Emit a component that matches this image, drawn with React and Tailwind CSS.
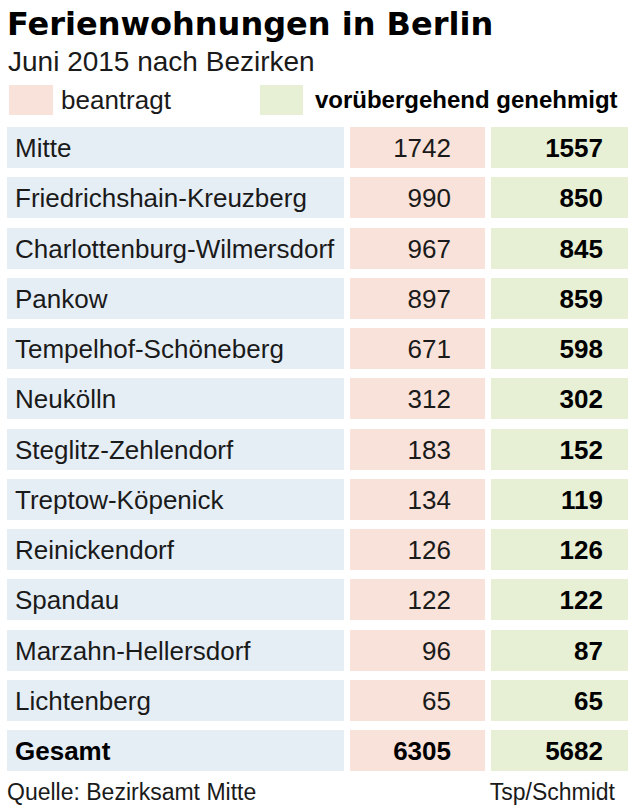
const bezirke = [
  { name: "Mitte", beantragt: 1742, genehmigt: 1557 },
  { name: "Friedrichshain-Kreuzberg", beantragt: 990, genehmigt: 850 },
  { name: "Charlottenburg-Wilmersdorf", beantragt: 967, genehmigt: 845 },
  { name: "Pankow", beantragt: 897, genehmigt: 859 },
  { name: "Tempelhof-Schöneberg", beantragt: 671, genehmigt: 598 },
  { name: "Neukölln", beantragt: 312, genehmigt: 302 },
  { name: "Steglitz-Zehlendorf", beantragt: 183, genehmigt: 152 },
  { name: "Treptow-Köpenick", beantragt: 134, genehmigt: 119 },
  { name: "Reinickendorf", beantragt: 126, genehmigt: 126 },
  { name: "Spandau", beantragt: 122, genehmigt: 122 },
  { name: "Marzahn-Hellersdorf", beantragt: 96, genehmigt: 87 },
  { name: "Lichtenberg", beantragt: 65, genehmigt: 65 },
];

const Zeile = ({ name, beantragt, genehmigt, gesamt = false }) => (
  <div className="flex h-[41px] gap-[6px] text-[26px]">
    <div
      className={`flex w-[337px] items-center bg-[#e6eef5] pl-[8px] pt-[2px] ${
        gesamt ? "font-bold text-black" : "text-[#1a1a1a]"
      }`}
    >
      {name}
    </div>
    <div
      className={`flex w-[135px] items-center justify-end bg-[#f8e2d9] pr-[34px] pt-[2px] ${
        gesamt ? "font-bold text-black" : "text-[#1a1a1a]"
      }`}
    >
      {beantragt}
    </div>
    <div className="flex w-[137px] items-center justify-end bg-[#e7efd5] pr-[25px] pt-[2px] font-bold text-black">
      {genehmigt}
    </div>
  </div>
);

export default function App() {
  return (
    <div className="h-[810px] w-[630px] bg-white font-['Liberation_Sans',Arial,sans-serif] text-[#1a1a1a]">
      <h1 className="pl-[7px] pt-[8px] font-['DejaVu_Sans',sans-serif] text-[32px] font-bold leading-[32px] text-black">
        Ferienwohnungen in Berlin
      </h1>
      <p className="mt-[8px] pl-[8px] text-[28px] leading-[28px]">
        Juni 2015 nach Bezirken
      </p>

      <div className="mt-[9px] flex h-[30px] items-center">
        <span className="ml-[9px] h-[30px] w-[44px] bg-[#f8e2d9]" />
        <span className="ml-[8px] text-[26px] leading-[30px]">beantragt</span>
        <span className="ml-[89px] h-[30px] w-[43px] bg-[#e7efd5]" />
        <span className="ml-[12px] text-[24px] font-bold leading-[30px] text-black">
          vorübergehend genehmigt
        </span>
      </div>

      <div className="mt-[12px] flex flex-col gap-[9.25px] pl-[7px]">
        {bezirke.map((b) => (
          <Zeile key={b.name} {...b} />
        ))}
        <Zeile name="Gesamt" beantragt={6305} genehmigt={5682} gesamt />
      </div>

      <div className="mt-[10px] flex items-start justify-between pl-[7px] pr-[15px] text-[23px] leading-[23px]">
        <span>Quelle: Bezirksamt Mitte</span>
        <span>Tsp/Schmidt</span>
      </div>
    </div>
  );
}
